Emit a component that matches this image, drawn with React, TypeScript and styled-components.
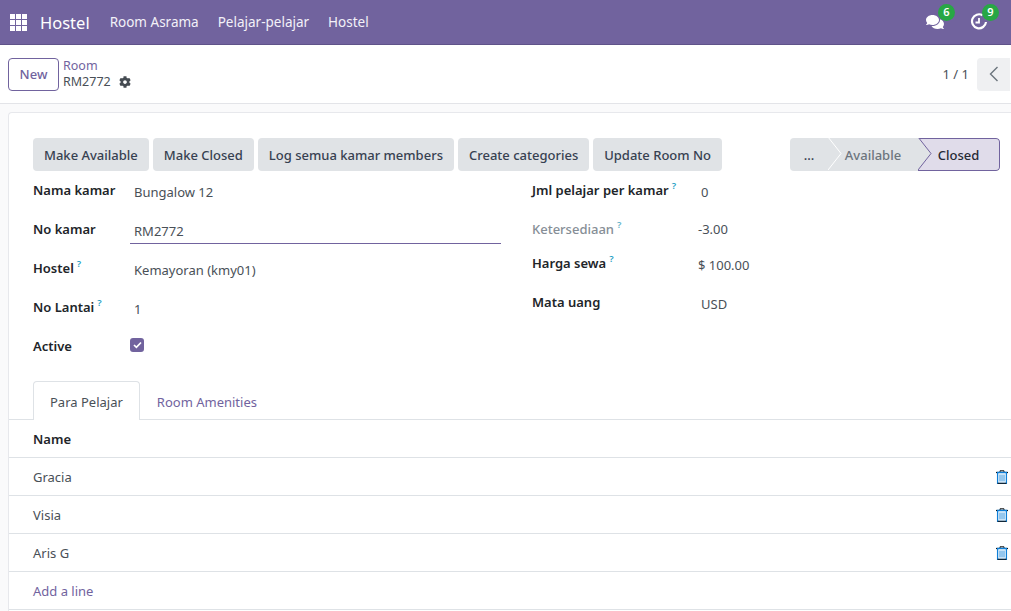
import styled, { createGlobalStyle } from 'styled-components';
import { FaCog, FaComments } from 'react-icons/fa';

const GlobalStyle = createGlobalStyle`
  html, body {
    margin: 0;
    height: 611px;
    overflow: hidden;
    background: #fafafb;
    font-family: "Noto Sans", "Open Sans", sans-serif;
    font-size: 13px;
    color: #495057;
  }
`;

const TopBar = styled.header`
  display: flex;
  align-items: center;
  height: 44px;
  padding: 0 12px 0 10px;
  background: #71639e;
  border-bottom: 1px solid #5f5389;
  color: #fff;
`;
const AppsGrid = styled.div`
  display: grid;
  grid-template-columns: repeat(3, 5px);
  grid-auto-rows: 5px;
  gap: 1px;
  margin-right: 13px;
  span { background: #fff; }
`;
const Brand = styled.div`
  font-size: 16.5px;
  margin-right: 20px;
`;
const NavLink = styled.a`
  font-size: 13.5px;
  margin-right: 19px;
  color: #f3f1f8;
`;
const Spacer = styled.div`
  flex: 1;
`;
const Systray = styled.div<{ $gap: number }>`
  position: relative;
  display: flex;
  align-items: center;
  margin-right: ${(p) => p.$gap}px;
  height: 18px;
  width: 18px;
`;
const Badge = styled.span`
  position: absolute;
  left: 12px;
  top: -9px;
  width: 17px;
  height: 17px;
  border-radius: 50%;
  background: #28a745;
  color: #fff;
  font-size: 11px;
  font-weight: 600;
  line-height: 16px;
  text-align: center;
`;

const ControlPanel = styled.div`
  display: flex;
  align-items: center;
  height: 58px;
  padding: 0 0 0 8px;
  background: #fff;
  border-bottom: 1px solid #e3e4e8;
`;
const NewButton = styled.button`
  width: 51px;
  height: 33px;
  padding: 0;
  background: #fff;
  border: 1px solid #71639e;
  border-radius: 4px;
  color: #71639e;
  font: 500 13px "Noto Sans", sans-serif;
  margin-right: 4px;
`;
const Crumbs = styled.div`
  display: flex;
  flex-direction: column;
  line-height: 16px;
  font-size: 12.5px;
`;
const CrumbLink = styled.a`
  color: #71639e;
`;
const CrumbCurrent = styled.div`
  display: flex;
  align-items: center;
  gap: 8px;
  color: #495057;
  svg { color: #454b52; }
`;
const Pager = styled.div`
  margin-right: 8px;
  color: #495057;
`;
const PagerButton = styled.button`
  display: flex;
  align-items: center;
  justify-content: center;
  width: 33px;
  height: 33px;
  padding: 0;
  margin-right: 1px;
  border: 0;
  border-radius: 4px 0 0 4px;
  background: #eff0f2;
`;

const Sheet = styled.main`
  margin: 8px 0 0 8px;
  padding-top: 25px;
  background: #fff;
  border: 1px solid #e7e8ec;
  border-right: 0;
  border-radius: 4px 0 0 0;
  height: 520px;
`;
const ActionRow = styled.div`
  display: flex;
  justify-content: space-between;
  padding: 0 11px 0 24px;
`;
const Actions = styled.div`
  display: flex;
  gap: 4px;
`;
const ActionButton = styled.button`
  height: 33px;
  padding: 0 11px;
  border: 0;
  border-radius: 4px;
  background: #e0e3e6;
  color: #374151;
  font: 500 13px "Noto Sans", sans-serif;
  white-space: nowrap;
`;
const StatusBar = styled.div`
  display: flex;
  height: 33px;
  width: 210px;
  border-radius: 4px;
  overflow: hidden;
`;
const StatusStep = styled.div<{ $width: number; $active?: boolean; $muted?: boolean }>`
  position: relative;
  display: flex;
  align-items: center;
  justify-content: center;
  box-sizing: border-box;
  width: ${(p) => p.$width}px;
  background: ${(p) => (p.$active ? '#e0dcea' : '#e0e3e6')};
  color: ${(p) => (p.$active ? '#262a36' : p.$muted ? '#6c757d' : '#374151')};
  font-weight: 500;
  border: ${(p) => (p.$active ? '1px solid #71639e' : '0')};
  border-left: 0;
  border-radius: ${(p) => (p.$active ? '0 4px 4px 0' : '0')};
  svg { position: absolute; left: 100%; top: -1px; z-index: 1; }
`;

const FormGrid = styled.div`
  display: grid;
  grid-template-columns: 492px 1fr;
  column-gap: 7px;
  padding: 0 0 0 24px;
`;
const FieldColumn = styled.div`
  display: flex;
  flex-direction: column;
`;
const Field = styled.div<{ $height: number; $labelWidth: number }>`
  display: grid;
  grid-template-columns: ${(p) => p.$labelWidth}px 1fr;
  height: ${(p) => p.$height}px;
  align-items: start;
`;
const Label = styled.label<{ $muted?: boolean }>`
  margin-top: 9px;
  line-height: 20px;
  font-weight: 600;
  white-space: nowrap;
  color: ${(p) => (p.$muted ? '#868e96' : '#212529')};
  font-weight: ${(p) => (p.$muted ? 500 : 600)};
`;
const Help = styled.sup<{ $muted?: boolean }>`
  margin-left: 3px;
  font-size: 9.5px;
  font-weight: 600;
  color: ${(p) => (p.$muted ? '#5fb3c9' : '#1f9fc4')};
  line-height: 0;
  vertical-align: 6px;
`;
const Value = styled.div<{ $top: number; $pad: number }>`
  margin-top: ${(p) => p.$top}px;
  padding-left: ${(p) => p.$pad}px;
  line-height: 20px;
  color: #495057;
`;
const InputValue = styled(Value)`
  border-bottom: 1px solid #71639e;
  width: 367px;
  padding-bottom: 2px;
`;
const Check = styled.span`
  display: flex;
  align-items: center;
  justify-content: center;
  width: 14px;
  height: 14px;
  margin-top: 11px;
  border-radius: 3px;
  background: #71639e;
`;

const Tabs = styled.div`
  display: flex;
  margin-top: 15px;
  padding-left: 24px;
  height: 38px;
  border-bottom: 1px solid #dee2e6;
`;
const Tab = styled.div<{ $active?: boolean }>`
  box-sizing: border-box;
  height: 39px;
  padding: 0 16px;
  line-height: 40px;
  color: ${(p) => (p.$active ? '#495057' : '#71639e')};
  background: ${(p) => (p.$active ? '#fff' : 'transparent')};
  border: 1px solid ${(p) => (p.$active ? '#dee2e6' : 'transparent')};
  border-bottom: 0;
  border-radius: 4px 4px 0 0;
`;
const TableRow = styled.div<{ $head?: boolean; $link?: boolean }>`
  display: flex;
  align-items: center;
  justify-content: space-between;
  box-sizing: border-box;
  height: 38px;
  padding: 0 3px 0 24px;
  border-bottom: 1px solid #dee2e6;
  font-weight: ${(p) => (p.$head ? 600 : 400)};
  color: ${(p) => (p.$head ? '#212529' : p.$link ? '#71639e' : '#495057')};
`;

const TrashIcon = () => (
  <svg width="12" height="14" viewBox="0 0 12 14">
    <path d="M0 2.5h12" stroke="#111" strokeWidth="1.2" />
    <path d="M4 2.5V.8h4v1.7" stroke="#111" strokeWidth="1" fill="none" />
    <path d="M1.6 2.5h8.8v10.8H1.6z" stroke="#0f7fd8" strokeWidth="1.3" fill="#fff" />
    <path d="M4 4.5v7M6 4.5v7M8 4.5v7" stroke="#2a8fdd" strokeWidth="1" />
    <path d="M1.6 13.3h8.8" stroke="#111" strokeWidth="1" />
  </svg>
);

const ClockIcon = () => (
  <svg width="18" height="18" viewBox="0 0 18 18" fill="none">
    <path d="M12.5 2.2A7 7 0 1 0 16 9" stroke="#fff" strokeWidth="2.2" />
    <path d="M9 5v4.5H5.5" stroke="#fff" strokeWidth="1.8" />
  </svg>
);

const Chevron = ({ color, fill }: { color: string; fill: string }) => (
  <svg width="14" height="33" viewBox="0 0 14 33">
    <path d="M0 0L13 16.5L0 33" fill={fill} stroke={color} strokeWidth="1" />
  </svg>
);

const leftFields = [
  { label: 'Nama kamar', value: 'Bungalow 12' },
  { label: 'No kamar', value: 'RM2772', input: true },
  { label: 'Hostel', value: 'Kemayoran (kmy01)', help: true },
  { label: 'No Lantai', value: '1', help: true },
];
const rightFields = [
  { label: 'Jml pelajar per kamar', value: '0', help: true, height: 39, top: 11, pad: 3 },
  { label: 'Ketersediaan', value: '-3.00', help: true, muted: true, height: 34, top: 9, pad: 0 },
  { label: 'Harga sewa', value: '$ 100.00', help: true, height: 39, top: 11, pad: 0 },
  { label: 'Mata uang', value: 'USD', height: 39, top: 11, pad: 3 },
];

export default function App() {
  return (
    <>
      <GlobalStyle />
      <TopBar>
        <AppsGrid>
          {Array.from({ length: 9 }).map((_, i) => (
            <span key={i} />
          ))}
        </AppsGrid>
        <Brand>Hostel</Brand>
        <NavLink>Room Asrama</NavLink>
        <NavLink>Pelajar-pelajar</NavLink>
        <NavLink>Hostel</NavLink>
        <Spacer />
        <Systray $gap={26}>
          <FaComments size={18} color="#fff" />
          <Badge>6</Badge>
        </Systray>
        <Systray $gap={11}>
          <ClockIcon />
          <Badge>9</Badge>
        </Systray>
      </TopBar>
      <ControlPanel>
        <NewButton>New</NewButton>
        <Crumbs>
          <CrumbLink>Room</CrumbLink>
          <CrumbCurrent>
            RM2772 <FaCog size={12} />
          </CrumbCurrent>
        </Crumbs>
        <Spacer />
        <Pager>1 / 1</Pager>
        <PagerButton aria-label="Previous">
          <svg width="10" height="16" viewBox="0 0 10 16" fill="none">
            <path d="M8.5 1L1.5 8l7 7" stroke="#6c757d" strokeWidth="1.4" />
          </svg>
        </PagerButton>
      </ControlPanel>
      <Sheet>
        <ActionRow>
          <Actions>
            <ActionButton>Make Available</ActionButton>
            <ActionButton>Make Closed</ActionButton>
            <ActionButton>Log semua kamar members</ActionButton>
            <ActionButton>Create categories</ActionButton>
            <ActionButton>Update Room No</ActionButton>
          </Actions>
          <StatusBar>
            <StatusStep $width={38}>
              ...
              <Chevron color="#fff" fill="#e0e3e6" />
            </StatusStep>
            <StatusStep $width={90} $muted>
              Available
              <Chevron color="#71639e" fill="#e0e3e6" />
            </StatusStep>
            <StatusStep $width={82} $active>
              Closed
            </StatusStep>
          </StatusBar>
        </ActionRow>
        <FormGrid>
          <FieldColumn>
            {leftFields.map((f) => (
              <Field key={f.label} $height={39} $labelWidth={97}>
                <Label>
                  {f.label}
                  {f.help && <Help>?</Help>}
                </Label>
                {f.input ? (
                  <InputValue $top={11} $pad={4}>
                    {f.value}
                  </InputValue>
                ) : (
                  <Value $top={11} $pad={4}>
                    {f.value}
                  </Value>
                )}
              </Field>
            ))}
            <Field $height={39} $labelWidth={97}>
              <Label>Active</Label>
              <Check>
                <svg width="9" height="8" viewBox="0 0 9 8" fill="none">
                  <path d="M1 4l2.4 2.4L8 1.5" stroke="#fff" strokeWidth="1.7" />
                </svg>
              </Check>
            </Field>
          </FieldColumn>
          <FieldColumn>
            {rightFields.map((f) => (
              <Field key={f.label} $height={f.height} $labelWidth={166}>
                <Label $muted={f.muted}>
                  {f.label}
                  {f.help && <Help $muted={f.muted}>?</Help>}
                </Label>
                <Value $top={f.top} $pad={f.pad}>
                  {f.value}
                </Value>
              </Field>
            ))}
          </FieldColumn>
        </FormGrid>
        <Tabs>
          <Tab $active>Para Pelajar</Tab>
          <Tab>Room Amenities</Tab>
        </Tabs>
        <TableRow $head>Name</TableRow>
        {['Gracia', 'Visia', 'Aris G'].map((name) => (
          <TableRow key={name}>
            {name}
            <TrashIcon />
          </TableRow>
        ))}
        <TableRow $link>Add a line</TableRow>
      </Sheet>
    </>
  );
}
